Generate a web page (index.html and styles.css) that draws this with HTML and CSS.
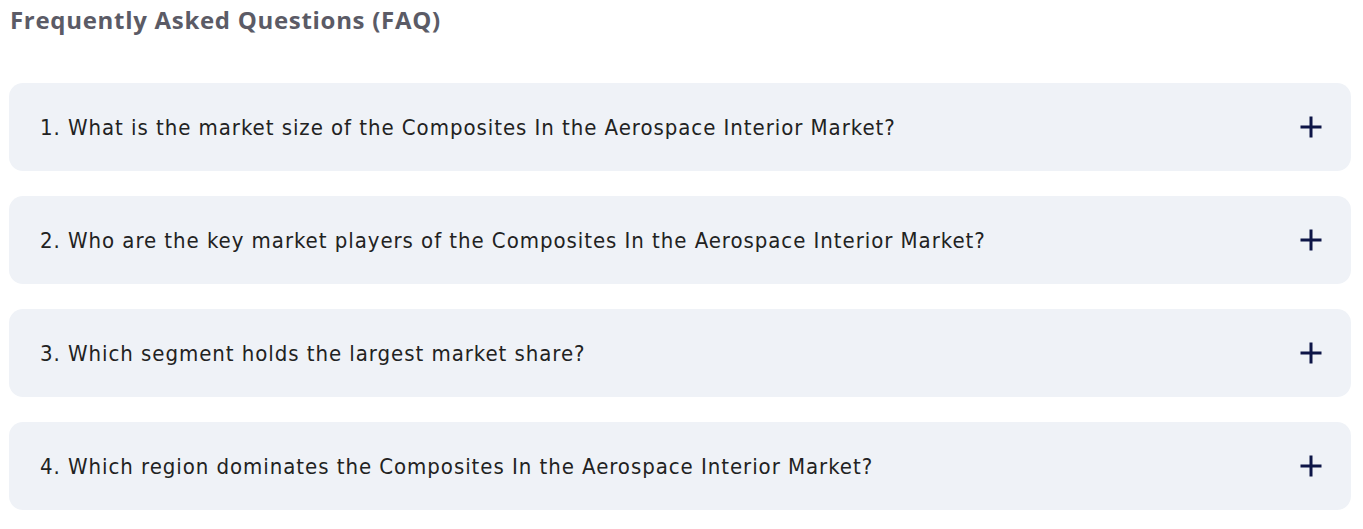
FILE: index.html
```html
<!DOCTYPE html>
<html>
<head>
<meta charset="utf-8">
<link rel="stylesheet" href="styles.css">
</head>
<body>
<div class="faq">
  <h2 class="faq-title">Frequently Asked Questions (FAQ)</h2>
  <div class="faq-list">
    <div class="faq-item"><span class="q">1. What is the market size of the Composites In the Aerospace Interior Market?</span><svg class="plus" viewBox="0 0 22 22"><path d="M11 0.5v21M0.5 11h21"/></svg></div>
    <div class="faq-item"><span class="q">2. Who are the key market players of the Composites In the Aerospace Interior Market?</span><svg class="plus" viewBox="0 0 22 22"><path d="M11 0.5v21M0.5 11h21"/></svg></div>
    <div class="faq-item"><span class="q">3. Which segment holds the largest market share?</span><svg class="plus" viewBox="0 0 22 22"><path d="M11 0.5v21M0.5 11h21"/></svg></div>
    <div class="faq-item"><span class="q">4. Which region dominates the Composites In the Aerospace Interior Market?</span><svg class="plus" viewBox="0 0 22 22"><path d="M11 0.5v21M0.5 11h21"/></svg></div>
  </div>
</div>
</body>
</html>
```
FILE: styles.css
```css
body {
  margin: 0;
  background: #fff;
}
.faq {
  padding: 3px 12px 0 9px;
}
.faq-title {
  margin: 0 0 0 1px;
  font-family: "Open Sans", sans-serif;
  font-weight: 700;
  font-size: 24px;
  line-height: 33px;
  letter-spacing: 0.7px;
  color: #5b5b66;
}
.faq-list {
  margin-top: 47px;
  display: flex;
  flex-direction: column;
  gap: 25px;
}
.faq-item {
  height: 88px;
  background: #eff2f7;
  border-radius: 14px;
  display: flex;
  align-items: center;
  justify-content: space-between;
  padding: 0 29px 0 31px;
}
.q {
  font-family: "DejaVu Sans Condensed", "DejaVu Sans", sans-serif;
  font-stretch: condensed;
  font-size: 22px;
  color: #222;
  letter-spacing: 0.95px;
}
.plus {
  width: 22px;
  height: 22px;
  fill: none;
  stroke: #0d1547;
  stroke-width: 3;
}
```
